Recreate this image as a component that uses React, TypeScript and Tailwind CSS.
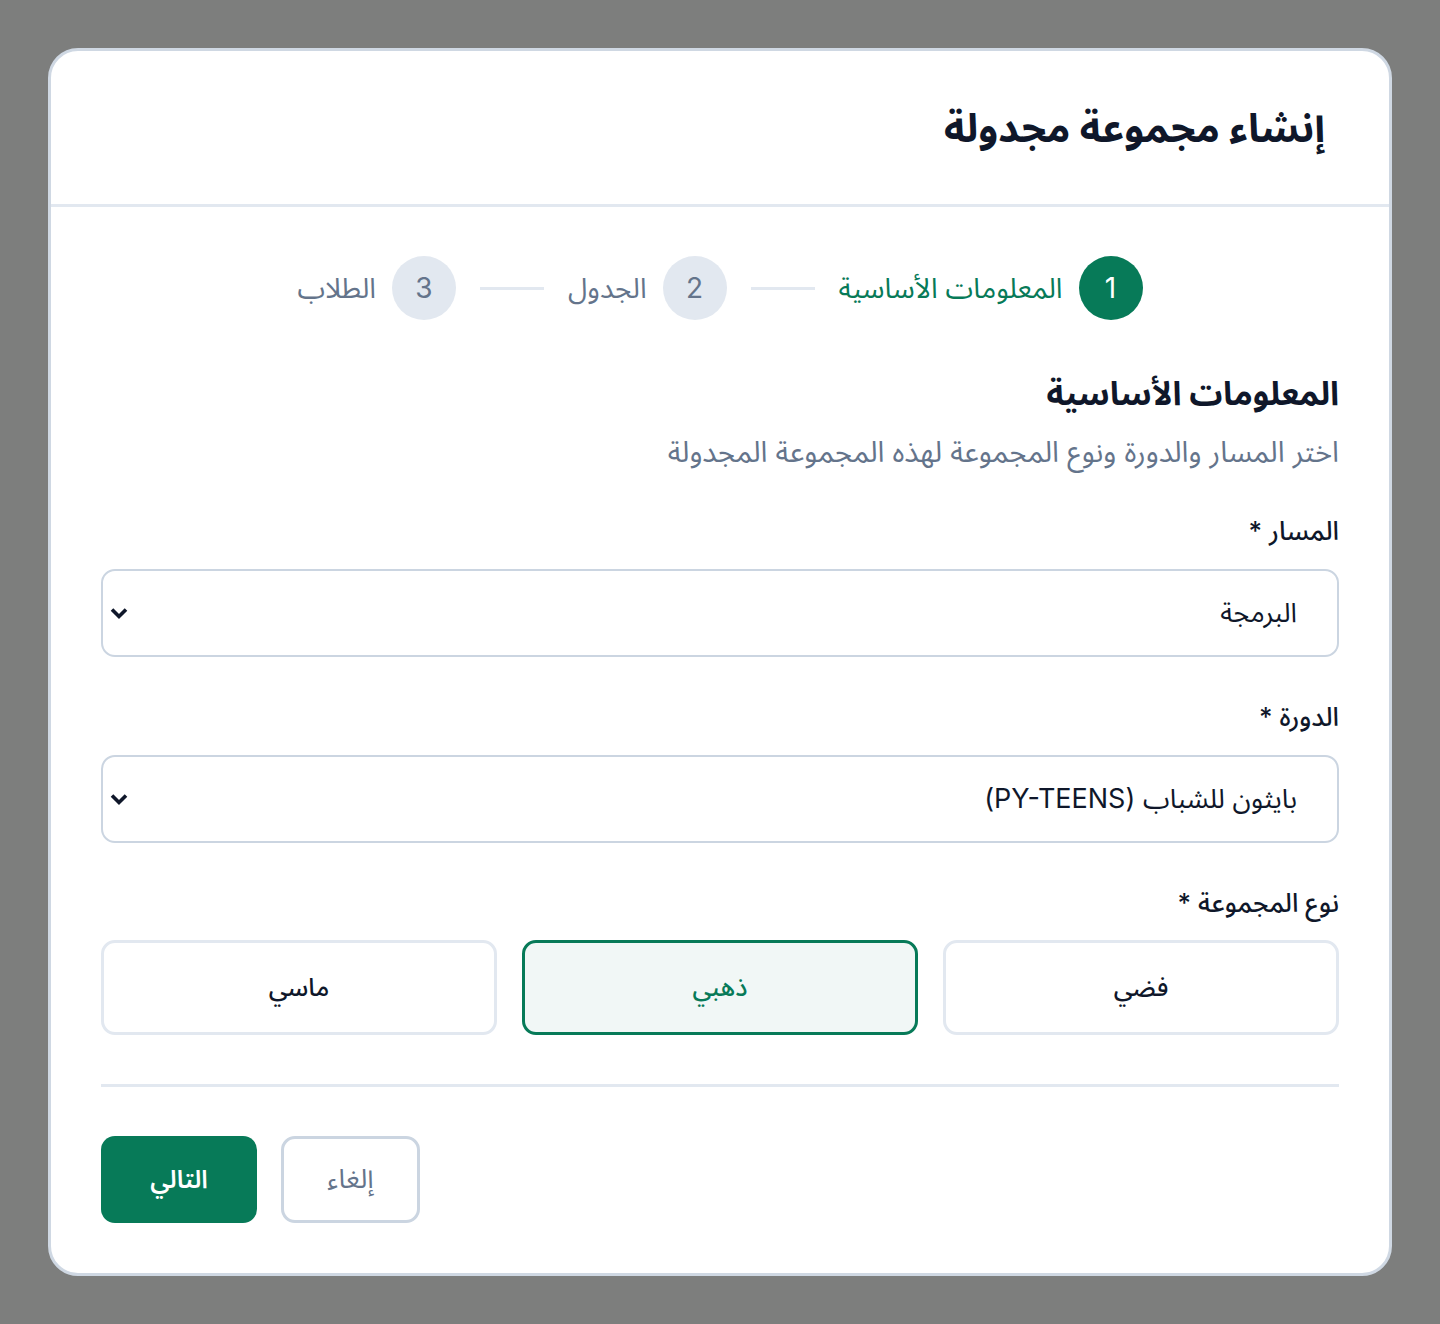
import { useState } from 'react'

const steps = [
  { n: 1, label: 'المعلومات الأساسية' },
  { n: 2, label: 'الجدول' },
  { n: 3, label: 'الطلاب' },
]

const groupTypes = ['فضي', 'ذهبي', 'ماسي']

function Chevron() {
  return (
    <svg width="20" height="20" viewBox="0 0 20 20" className="text-[#0f172a]">
      <path d="M3 6.5l7 7 7-7" fill="none" stroke="currentColor" strokeWidth="3.6" />
    </svg>
  )
}

function SelectBox({ value }: { value: string }) {
  return (
    <div className="mt-[20px] flex h-[88px] items-center justify-between rounded-[14px] border-2 border-[#cbd5e1] bg-white pr-[40px] pl-[6px]">
      <span className="text-[27px] leading-[36px] text-[#0f172a]">{value}</span>
      <Chevron />
    </div>
  )
}

export default function App() {
  const [groupType, setGroupType] = useState('ذهبي')

  return (
    <div
      className="min-h-[1324px] bg-[#7d7e7d] px-[48px] pt-[48px] pb-[48px]"
      style={{ fontFamily: 'Inter, "Noto Sans Arabic", "Noto Sans", "DejaVu Sans", sans-serif' }}
    >
      <div dir="rtl" className="overflow-hidden rounded-[30px] border-[3px] border-[#cfd8e3] bg-white">
        <div className="flex h-[156px] items-center border-b-[3px] border-[#e2e8f0] px-[64px]">
          <h1 className="text-[40px] leading-[48px] font-bold text-[#0f172a]">إنشاء مجموعة مجدولة</h1>
        </div>

        <div className="px-[50px] pt-[49px] pb-[50px]">
          {/* steps */}
          <div className="flex items-center justify-center gap-6">
            {steps.map((s, i) => (
              <div key={s.n} className="flex items-center gap-6">
                <div className="flex items-center gap-4">
                  <div
                    className={
                      s.n === 1
                        ? 'flex h-16 w-16 items-center justify-center rounded-full bg-[#077a58] text-[28px] text-white'
                        : 'flex h-16 w-16 items-center justify-center rounded-full bg-[#e2e8f0] text-[28px] text-[#64748b]'
                    }
                  >
                    {s.n}
                  </div>
                  <span className={s.n === 1 ? 'text-[28px] leading-[40px] text-[#077a58]' : 'text-[28px] leading-[40px] text-[#64748b]'}>
                    {s.label}
                  </span>
                </div>
                {i < steps.length - 1 && <div className="h-[3px] w-16 bg-[#e2e8f0]" />}
              </div>
            ))}
          </div>

          <h2 className="mt-[53px] text-[33px] leading-[40px] font-bold text-[#0f172a]">المعلومات الأساسية</h2>
          <p className="mt-[21px] text-[29px] leading-[36px] text-[#64748b]">
            اختر المسار والدورة ونوع المجموعة لهذه المجموعة المجدولة
          </p>

          <label className="mt-[43px] block text-[26px] leading-[36px] font-medium text-[#0f172a]">المسار *</label>
          <SelectBox value="البرمجة" />

          <label className="mt-[42px] block text-[26px] leading-[36px] font-medium text-[#0f172a]">الدورة *</label>
          <SelectBox value="بايثون للشباب (PY-TEENS)" />

          <label className="mt-[42px] block text-[26px] leading-[36px] font-medium text-[#0f172a]">نوع المجموعة *</label>
          <div className="mt-[19px] grid grid-cols-3 gap-[25px]">
            {groupTypes.map((t) => (
              <button
                key={t}
                onClick={() => setGroupType(t)}
                className={
                  groupType === t
                    ? 'h-[95px] rounded-[14px] border-[3px] border-[#077a58] bg-[#f1f7f6] text-[25px] font-medium text-[#077a58]'
                    : 'h-[95px] rounded-[14px] border-[3px] border-[#e2e8f0] bg-white text-[25px] font-medium text-[#0f172a]'
                }
              >
                {t}
              </button>
            ))}
          </div>

          <div className="mt-[49px] h-[3px] bg-[#e2e8f0]" />

          <div className="mt-[49px] flex justify-end gap-6">
            <button className="h-[87px] w-[139px] rounded-[14px] border-[3px] border-[#cbd5e1] bg-white text-[27px] text-[#64748b]">
              إلغاء
            </button>
            <button className="h-[87px] w-[156px] rounded-[14px] bg-[#077a58] text-[25px] font-semibold text-white">
              التالي
            </button>
          </div>
        </div>
      </div>
    </div>
  )
}
